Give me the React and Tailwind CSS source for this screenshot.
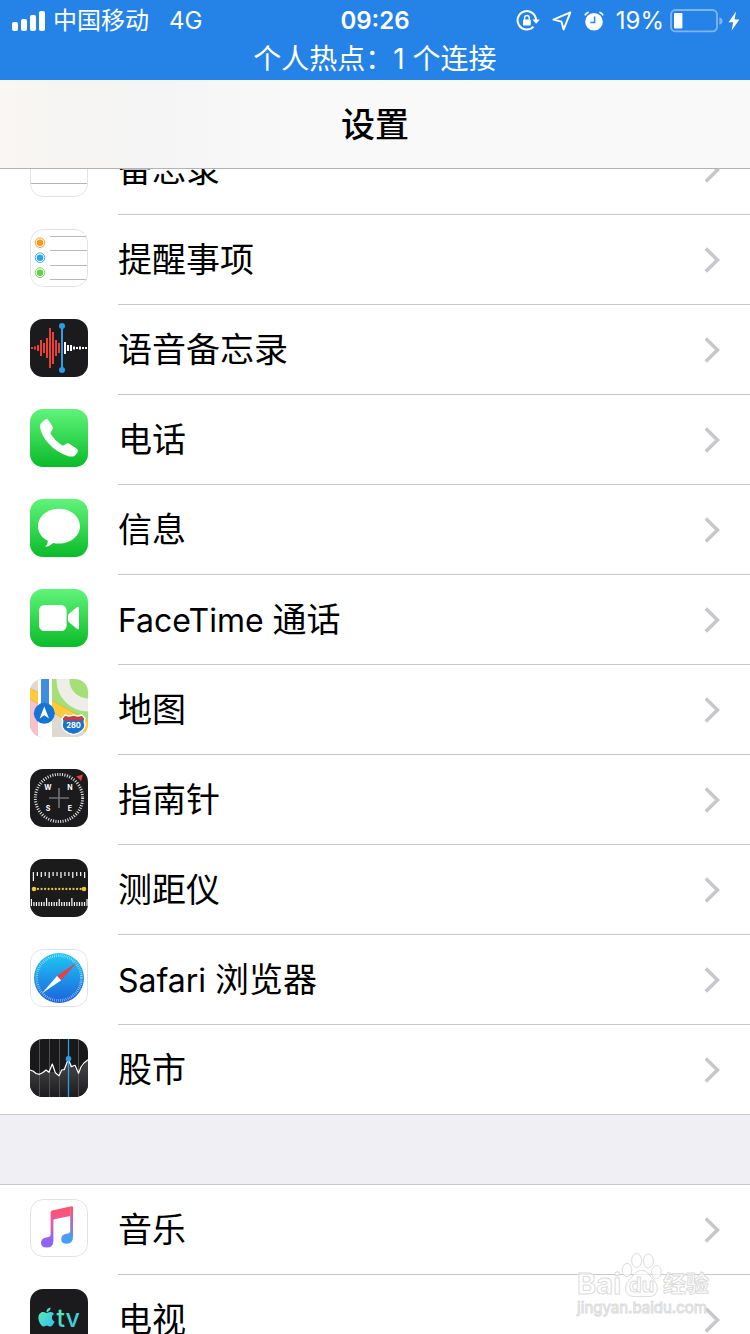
import { FaApple } from 'react-icons/fa';

const RED_BARS = [2, 3, 6, 16, 10, 20, 40, 32, 16, 10];
const WHITE_BARS = [12, 6, 6, 3, 2, 3, 2, 2];

function Tile({ children, className = '' }) {
  return (
    <svg viewBox="0 0 58 58" aria-hidden="true" className={`size-[58px] rounded-[13px] ${className}`}>
      {children}
    </svg>
  );
}

function Outline() {
  return <rect x="0.5" y="0.5" width="57" height="57" rx="12.5" fill="none" stroke="#e2e2e4" />;
}

function GreenTile({ id, children }) {
  return (
    <Tile>
      <defs>
        <linearGradient id={id} x1="0" y1="0" x2="0" y2="1">
          <stop offset="0" stopColor="#60f47a" />
          <stop offset="1" stopColor="#0abb29" />
        </linearGradient>
      </defs>
      <rect width="58" height="58" fill={`url(#${id})`} />
      {children}
    </Tile>
  );
}

function NotesIcon() {
  return (
    <Tile className="bg-white">
      <path d="M0 44.5H58" stroke="#b5b5b5" />
      <Outline />
    </Tile>
  );
}

function RemindersIcon() {
  const dots = [[13.7, '#f7991c'], [28.7, '#25a8ea'], [43.7, '#62d143']];
  return (
    <Tile className="bg-white">
      <path d="M20 7.5H58M20 21.5H58M20 36.5H58M20 50.5H58" stroke="#b9b9b9" />
      {dots.map(([y, color]) => (
        <g key={color}>
          <circle cx="10" cy={y} r="4.8" fill="none" stroke={color} strokeWidth="0.9" />
          <circle cx="10" cy={y} r="3.3" fill={color} />
        </g>
      ))}
      <Outline />
    </Tile>
  );
}

function VoiceMemosIcon() {
  return (
    <Tile className="bg-[#1b1b1e]">
      {RED_BARS.map((h, i) => (
        <rect key={i} x={1 + i * 3} y={29 - h / 2} width="2" height={h} fill="#ea4038" />
      ))}
      {WHITE_BARS.map((h, i) => (
        <rect key={i} x={34 + i * 3} y={29 - h / 2} width="2" height={h} fill="#fff" />
      ))}
      <path d="M32 7V51" stroke="#2a9fe8" strokeWidth="2" />
      <circle cx="32" cy="7" r="3" fill="#2a9fe8" />
      <circle cx="32" cy="51" r="3" fill="#2a9fe8" />
    </Tile>
  );
}

function PhoneIcon() {
  return (
    <GreenTile id="phone">
      <path
        d="M11 14.2 15 10.6Q17 9.3 18.6 11.5L22.4 17.3Q23.6 19.3 22.2 21L21 22.8Q20.2 24 21 25.4Q25.2 32 31.6 36Q33 36.8 34.2 36L36 34.8Q37.8 33.8 39.6 35L46.6 39.6Q48.7 41.2 47.6 43.2L45 46.4Q42.8 48.3 38.4 47.2Q26.8 43.8 18.6 34.6Q11.6 27 10.2 18.8Q9.8 15.8 11 14.2Z"
        fill="#fff"
      />
    </GreenTile>
  );
}

function MessagesIcon() {
  return (
    <GreenTile id="messages">
      <path
        d="M29 9.8C40.6 9.8 50 17.6 50 27.2S40.6 44.6 29 44.6Q26 44.6 23.2 44Q20 47.2 15.2 47.7Q18.2 45 17.8 41.8C11.6 38.6 8 33.2 8 27.2C8 17.6 17.4 9.8 29 9.8Z"
        fill="#fff"
      />
    </GreenTile>
  );
}

function FaceTimeIcon() {
  return (
    <GreenTile id="facetime">
      <rect x="9" y="16" width="27.6" height="26" rx="5.5" fill="#fff" />
      <path d="M38 27Q38 25.6 39 24.8L46.8 18.2Q49 16.8 49 19.2V38.8Q49 41.2 46.8 39.8L39 33.2Q38 32.4 38 31Z" fill="#fff" />
    </GreenTile>
  );
}

function MapsIcon() {
  return (
    <Tile className="bg-[#a4e077]">
      <path d="M0 0H22V24L58 45V58H0Z" fill="#dedad2" />
      <path d="M0 20 8 25V58H0Z" fill="#f6c1cb" />
      <circle cx="58" cy="1" r="25" fill="none" stroke="#efede7" strokeWidth="13" />
      <path d="M0 9 58 42V54L0 20Z" fill="#fdcb3c" />
      <path d="M0 9 58 42M0 20 58 54" stroke="#efb02e" strokeWidth="0.8" />
      <path d="M8 0H22V58H8Z" fill="#fff" />
      <path d="M11 0H19V34H11Z" fill="#3f8edd" />
      <circle cx="14.3" cy="34.3" r="10.5" fill="#1476d2" />
      <path d="M14.3 27.4 19 39.4 14.3 36.2 9.6 39.4Z" fill="#fff" />
      <path
        d="M35 36Q39 38 43.5 36Q48 38 52 36L55 39.5Q53.6 42 55 46Q55 53 43.5 55.6Q32 53 32 46Q33.4 42 32 39.5Z"
        fill="#1b74c8"
        stroke="#fff"
        strokeWidth="1.4"
      />
      <path d="M35.2 37.2Q39 38.8 43.5 37Q48 38.8 51.8 37.2L53.8 39.7L53.2 41.6H33.8L33.2 39.7Z" fill="#d23b3b" />
      <text x="43.5" y="49" fontSize="7.5" fontWeight="700" textAnchor="middle" fill="#fff" className="font-[Inter]">280</text>
    </Tile>
  );
}

function CompassIcon() {
  const letters = [['W', 18, 20.8], ['N', 39.8, 20.8], ['S', 18, 41.8], ['E', 39.8, 41.8]];
  return (
    <Tile className="bg-[#1b1b1e]">
      <circle cx="29" cy="29" r="23.6" fill="none" stroke="#e8e8e8" strokeWidth="3" strokeDasharray="1 1.47" />
      <path d="M29 19V39M19 29H39" stroke="#737373" strokeWidth="1.6" />
      {letters.map(([l, x, y]) => (
        <text key={l} x={x} y={y} fontSize="7" fontWeight="700" textAnchor="middle" fill="#fff" className="font-[Inter]">{l}</text>
      ))}
      <path d="M46.2 7.4 52.8 5.4 51.2 12Z" fill="#ea4038" />
    </Tile>
  );
}

function MeasureIcon() {
  const upper = [9, 4, 5, 4, 6, 4, 4, 6, 4, 4, 6, 4, 4, 6];
  const lower = [7, 4, 4, 4, 4, 4, 8, 4, 4, 4, 4, 7, 4, 4, 4, 4, 8, 4, 4, 4, 4, 4, 7];
  return (
    <Tile className="bg-[#1b1b1b]">
      {upper.map((h, i) => (
        <rect key={i} x={2.8 + i * 3.94} y="13" width="1.2" height={h} fill="#fff" />
      ))}
      {lower.map((h, i) => (
        <rect key={i} x={0.8 + i * 2.53} y={47 - h} width="1.2" height={h} fill="#fff" />
      ))}
      <path d="M8 30H51" stroke="#e8c53b" strokeWidth="2.3" strokeLinecap="round" strokeDasharray="0 3.55" />
      <circle cx="4" cy="30" r="2.3" fill="#e8c53b" />
      <circle cx="54" cy="30" r="2.3" fill="#e8c53b" />
    </Tile>
  );
}

function SafariIcon() {
  return (
    <Tile className="bg-white">
      <defs>
        <linearGradient id="safari" x1="0" y1="0" x2="0" y2="1">
          <stop offset="0" stopColor="#1fc8f4" />
          <stop offset="1" stopColor="#1c62dc" />
        </linearGradient>
      </defs>
      <circle cx="29" cy="29" r="25" fill="url(#safari)" />
      <circle cx="29" cy="29" r="22.4" fill="none" stroke="#fff" strokeOpacity="0.7" strokeWidth="2.6" strokeDasharray="0.6 1.36" />
      <path d="M46.7 13.5 27 26.9 31.2 31.2Z" fill="#ee3d3b" />
      <path d="M27 26.9 31.2 31.2 11.8 44.6Z" fill="#fff" />
      <Outline />
    </Tile>
  );
}

function StocksIcon() {
  return (
    <Tile>
      <defs>
        <linearGradient id="stocks" gradientUnits="userSpaceOnUse" x1="0" y1="22" x2="0" y2="58">
          <stop offset="0" stopColor="#47474a" />
          <stop offset="1" stopColor="#1c1c1e" />
        </linearGradient>
      </defs>
      <rect width="58" height="58" fill="#19191b" />
      <path d="M0 31 9.5 35.3 16 31 25 33.7 29 36.7 38.3 21 48.5 34 58 20.3V58H0Z" fill="url(#stocks)" />
      <path d="M9.5 0V58M19.5 0V58M29.5 0V58M48.5 0V58" stroke="#58585a" strokeWidth="0.9" />
      <path d="M38.5 0V58" stroke="#2a9fe8" strokeWidth="1.3" />
      <path
        d="M0 31 3 32 6 34.5 9.5 35.3 13 33.5 16 31 19 33.3 22.3 25 25.3 33.7 29 36.7 31.7 31 34.3 30.6 38.3 20 41.3 27.7 45 26.3 48.5 34.3 51 28 54 24 58 20.6"
        fill="none"
        stroke="#fff"
        strokeWidth="1.2"
        strokeLinejoin="round"
      />
      <circle cx="38.5" cy="19.7" r="2.8" fill="#2a9fe8" />
    </Tile>
  );
}

function MusicIcon() {
  return (
    <Tile className="bg-white">
      <defs>
        <linearGradient id="beam" gradientUnits="userSpaceOnUse" x1="30" y1="8" x2="30" y2="44">
          <stop offset="0.1" stopColor="#fa5470" />
          <stop offset="0.4" stopColor="#e85ca8" />
          <stop offset="0.95" stopColor="#8b64f6" />
        </linearGradient>
        <linearGradient id="stem" gradientUnits="userSpaceOnUse" x1="42" y1="8" x2="42" y2="44">
          <stop offset="0.1" stopColor="#fa5470" />
          <stop offset="0.5" stopColor="#a070d8" />
          <stop offset="0.85" stopColor="#46a0f2" />
        </linearGradient>
      </defs>
      <path
        d="M20.6 13.5Q20.6 11.8 22.2 11.4L40.3 7.6V17L24.4 20.3Q23.4 20.5 23.4 21.6V41.5Q23.4 48.6 16.8 48.6Q11 48.6 11 43.8Q11 39.6 16 38.5L18.6 38Q20.6 37.4 20.6 35.4Z"
        fill="url(#beam)"
      />
      <path
        d="M40.2 7.6 41.6 7.3Q43 7.1 43 8.6V37.6Q43 44.8 36.8 44.8Q31.2 44.8 31.2 40.2Q31.2 35.8 36.2 34.8L38.2 34.4Q40.2 33.8 40.2 32Z"
        fill="url(#stem)"
      />
      <Outline />
    </Tile>
  );
}

function TvIcon() {
  return (
    <Tile className="bg-[#1b1b1e]">
      <defs>
        <linearGradient id="tv" x1="0" y1="0" x2="1" y2="1">
          <stop offset="0" stopColor="#5cf0b0" />
          <stop offset="1" stopColor="#35bdf0" />
        </linearGradient>
      </defs>
      <FaApple x="5.5" y="17" size={22} fill="url(#tv)" />
      <text x="26.5" y="37.6" fontSize="25" fontWeight="500" fill="url(#tv)" className="font-[Inter]">tv</text>
    </Tile>
  );
}

const APPS = [
  { label: '备忘录', Icon: NotesIcon },
  { label: '提醒事项', Icon: RemindersIcon },
  { label: '语音备忘录', Icon: VoiceMemosIcon },
  { label: '电话', Icon: PhoneIcon },
  { label: '信息', Icon: MessagesIcon },
  { latin: 'FaceTime', label: '通话', Icon: FaceTimeIcon },
  { label: '地图', Icon: MapsIcon },
  { label: '指南针', Icon: CompassIcon },
  { label: '测距仪', Icon: MeasureIcon },
  { latin: 'Safari', label: '浏览器', Icon: SafariIcon },
  { label: '股市', Icon: StocksIcon },
];

const MEDIA = [
  { label: '音乐', Icon: MusicIcon },
  { label: '电视', Icon: TvIcon },
];

function Row({ latin, label, Icon }) {
  return (
    <li className="h-[90px] border-[#c8c7cc] last:border-b">
      <a href="#" className="flex h-full items-center gap-[30px] pl-[30px]">
        <span className="shrink-0 pb-1"><Icon /></span>
        <span className="flex h-full flex-1 items-center justify-between border-b border-[#c8c7cc] pr-[30px] in-[li:last-child]:border-b-0">
          <span className="pt-px text-[34px] leading-10">
            {latin && <span className="text-[32px]">{latin} </span>}
            {label}
          </span>
          <svg viewBox="0 0 16 26" aria-hidden="true" className="h-[26px] w-4 shrink-0">
            <path d="M1.8 1.5 13.5 13 1.8 24.5" fill="none" stroke="#c7c7cc" strokeWidth="3.6" />
          </svg>
        </span>
      </a>
    </li>
  );
}

function StatusBar() {
  return (
    <div className="bg-[#2583e7] pt-px text-white">
      <div className="grid h-10 grid-cols-[1fr_auto_1fr] items-center text-[24px] leading-10">
        <div className="flex items-center gap-2 pl-3">
          <svg viewBox="0 0 33 20" aria-hidden="true" className="h-5 w-[33px]" fill="#fff">
            <rect x="0" y="11" width="6" height="9" rx="2" />
            <rect x="9" y="8" width="6" height="12" rx="2" />
            <rect x="18" y="4" width="6" height="16" rx="2" />
            <rect x="27" y="0" width="6" height="20" rx="2" />
          </svg>
          <span>中国移动</span>
          <span className="pl-3">4G</span>
        </div>
        <time className="font-semibold">09:26</time>
        <div className="flex items-center justify-end pr-[10px]">
          <svg viewBox="0 0 24 22" aria-hidden="true" className="mr-3 h-[22px] w-6">
            <path d="M17.5 16.6A9.2 9.2 0 1 1 20 10" fill="none" stroke="#fff" strokeWidth="2" />
            <path d="M16.4 9.4H23.8L20.1 13.8Z" fill="#fff" />
            <rect x="7" y="9.4" width="7.8" height="6.2" rx="0.8" fill="#fff" />
            <path d="M8.6 10V7.8A2.3 2.3 0 0 1 13.2 7.8V10" fill="none" stroke="#fff" strokeWidth="1.4" />
          </svg>
          <svg viewBox="0 0 20 20" aria-hidden="true" className="mr-3 size-5">
            <path d="M18.4 1.4 1.4 8.6 9.4 10.6 11.6 18.6Z" fill="none" stroke="#fff" strokeWidth="1.9" strokeLinejoin="round" />
          </svg>
          <svg viewBox="0 0 20 20" aria-hidden="true" className="mr-3 size-5">
            <circle cx="10" cy="10.8" r="8.8" fill="#fff" />
            <path d="M0.9 4.4Q2 2 4.6 1.2M19.1 4.4Q18 2 15.4 1.2" fill="none" stroke="#fff" strokeWidth="1.6" />
            <path d="M10.6 5.4V11.4H6.4" fill="none" stroke="#2583e7" strokeWidth="1.5" />
          </svg>
          <span className="mr-[6px]">19%</span>
          <svg viewBox="0 0 54 24" aria-hidden="true" className="mr-1 h-6 w-[54px]">
            <rect x="1" y="1" width="46" height="21.4" rx="4.6" fill="none" stroke="#7db6f3" strokeWidth="1.8" />
            <path d="M49.4 8.4Q52.6 9 52.6 12T49.4 15.6Z" fill="#7db6f3" />
            <rect x="4" y="4" width="8.4" height="15.4" rx="0.8" fill="#fff" />
          </svg>
          <svg viewBox="0 0 12 20" aria-hidden="true" className="h-5 w-3">
            <path d="M8 0.6 0.6 11.2H5.2L3.6 19.4 11.4 8.4H6.6Z" fill="#fff" />
          </svg>
        </div>
      </div>
      <p className="h-[39px] text-center text-[28px] leading-9">个人热点：1 个连接</p>
    </div>
  );
}

function Watermark() {
  return (
    <div className="pointer-events-none absolute right-[41px] bottom-4 text-white/70 [-webkit-text-stroke:1px_#dcdcdc]">
      <div className="flex items-end leading-7 font-bold">
        <span className="text-[29px]">Bai</span>
        <svg viewBox="0 0 42 46" aria-hidden="true" className="h-[46px] w-[42px]" fill="#fff" fillOpacity="0.7" stroke="#dcdcdc">
          <ellipse cx="6" cy="18" rx="4.8" ry="6.6" />
          <ellipse cx="15.6" cy="8.4" rx="5" ry="7" />
          <ellipse cx="27.4" cy="9" rx="5" ry="7" />
          <ellipse cx="35.4" cy="20" rx="4.8" ry="6.6" />
          <path d="M20.6 18.4Q26 18.4 29 24Q36 30 36.4 36Q36 44.6 28 44.6H13Q4.4 44 4.4 36Q5 30 12 24Q15 18.4 20.6 18.4Z" />
          <text x="20.6" y="39.5" fontSize="20" textAnchor="middle" strokeWidth="1" className="font-[Inter]">du</text>
        </svg>
        <span className="text-[23px]">经验</span>
      </div>
      <div className="text-[15px] leading-5">jingyan.baidu.com</div>
    </div>
  );
}

export default function App() {
  return (
    <div className="relative flex h-screen flex-col overflow-hidden bg-[#efeff4] font-[Inter,'Noto_Sans_CJK_SC',sans-serif] text-black">
      <header className="relative z-10 shrink-0">
        <StatusBar />
        <div className="flex h-[89px] items-center justify-center border-b border-[#b2b2b2] bg-linear-to-r from-[#f9f6f3] via-[#f5f5f5] via-20% to-[#f9f9f9] to-40%">
          <h1 className="pt-0.5 text-[34px] font-medium leading-10">设置</h1>
        </div>
      </header>
      {/* list is scrolled, first row sits half under the title bar */}
      <main className="-mt-11 shrink-0">
        <ul className="bg-white">
          {APPS.map((app) => <Row key={app.label} {...app} />)}
        </ul>
        <ul className="mt-[69px] border-t border-[#c8c7cc] bg-white">
          {MEDIA.map((app) => <Row key={app.label} {...app} />)}
        </ul>
      </main>
      <Watermark />
    </div>
  );
}
